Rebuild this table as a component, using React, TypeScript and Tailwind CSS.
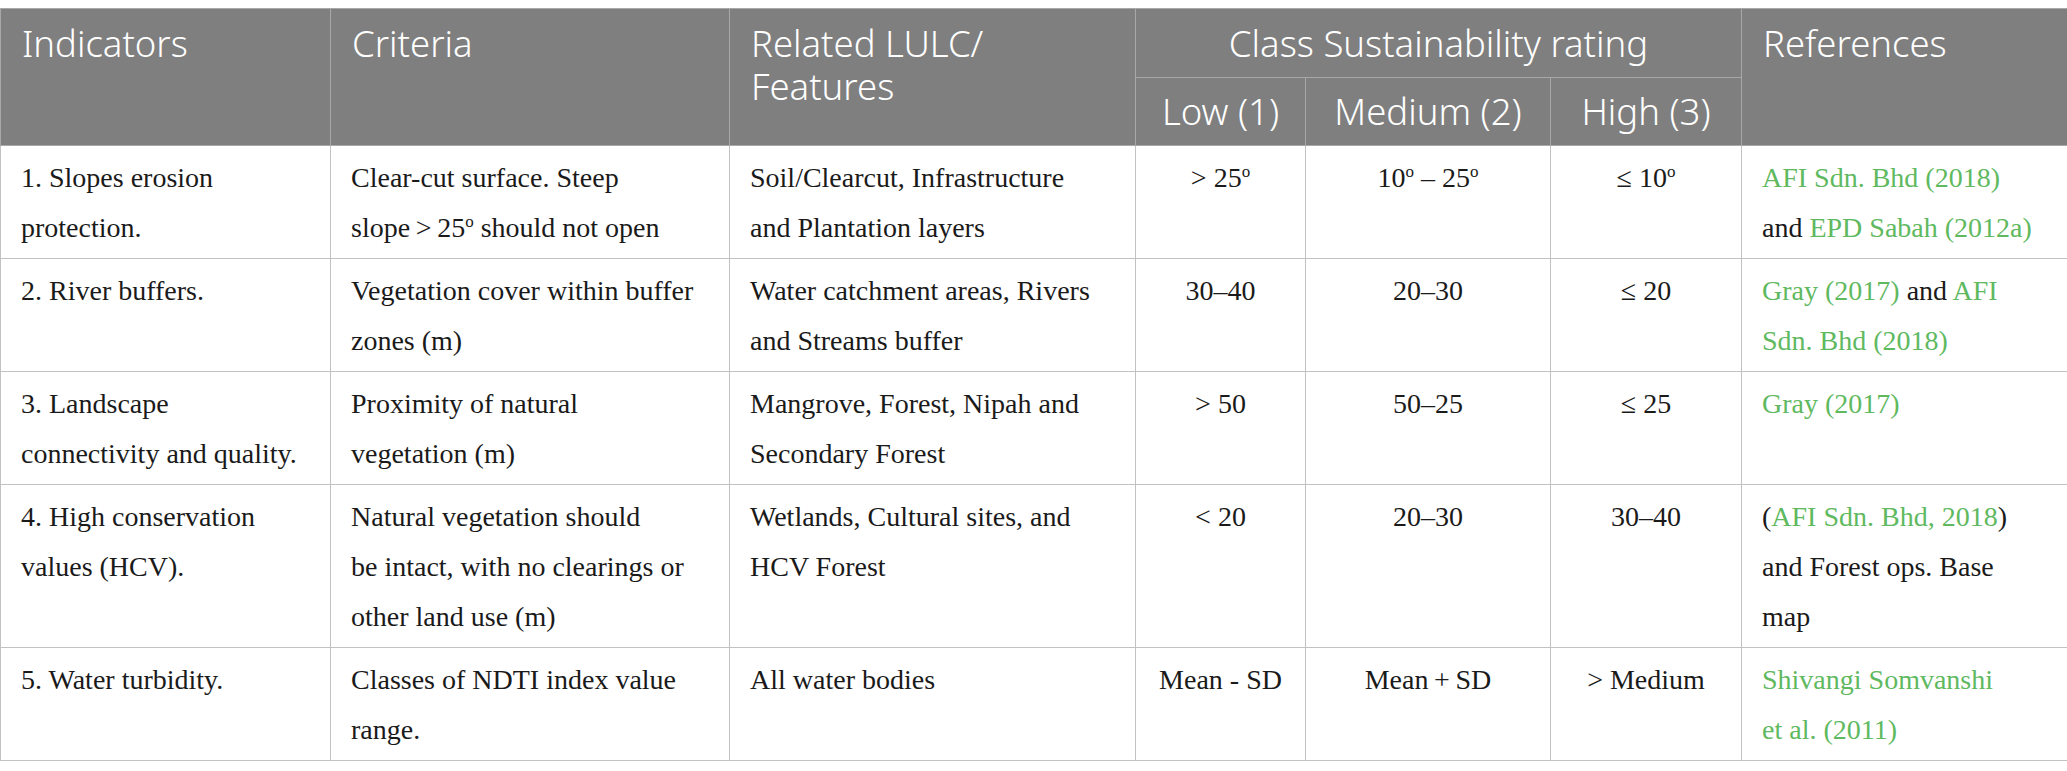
import type { ReactNode } from "react";

const G = ({ children }: { children: ReactNode }) => (
  <span className="text-[#5fb95f]">{children}</span>
);

const Deg = () => (
  <sup className="text-[17px] relative -top-[10px] align-baseline">o</sup>
);

type Row = {
  h: string;
  indicator: ReactNode;
  criteria: ReactNode;
  lulc: ReactNode;
  low: ReactNode;
  med: ReactNode;
  high: ReactNode;
  refs: ReactNode;
};

const rows: Row[] = [
  {
    h: "h-[112px]",
    indicator: (
      <>
        1. Slopes erosion
        <br />
        protection.
      </>
    ),
    criteria: (
      <>
        Clear-cut surface. Steep
        <br />
        slope{"\u2009"}&gt;{"\u2009"}25
        <Deg /> should not open
      </>
    ),
    lulc: (
      <>
        Soil/Clearcut, Infrastructure
        <br />
        and Plantation layers
      </>
    ),
    low: (
      <>
        &gt; 25
        <Deg />
      </>
    ),
    med: (
      <>
        10
        <Deg /> – 25
        <Deg />
      </>
    ),
    high: (
      <>
        ≤ 10
        <Deg />
      </>
    ),
    refs: (
      <>
        <G>AFI Sdn. Bhd (2018)</G>
        <br />
        and <G>EPD Sabah (2012a)</G>
      </>
    ),
  },
  {
    h: "h-[111px]",
    indicator: "2. River buffers.",
    criteria: (
      <>
        Vegetation cover within buffer
        <br />
        zones (m)
      </>
    ),
    lulc: (
      <>
        Water catchment areas, Rivers
        <br />
        and Streams buffer
      </>
    ),
    low: "30–40",
    med: "20–30",
    high: "≤ 20",
    refs: (
      <>
        <G>Gray (2017)</G> and <G>AFI</G>
        <br />
        <G>Sdn. Bhd (2018)</G>
      </>
    ),
  },
  {
    h: "h-[111px]",
    indicator: (
      <>
        3. Landscape
        <br />
        connectivity and quality.
      </>
    ),
    criteria: (
      <>
        Proximity of natural
        <br />
        vegetation (m)
      </>
    ),
    lulc: (
      <>
        Mangrove, Forest, Nipah and
        <br />
        Secondary Forest
      </>
    ),
    low: "> 50",
    med: "50–25",
    high: "≤ 25",
    refs: <G>Gray (2017)</G>,
  },
  {
    h: "h-[162px]",
    indicator: (
      <>
        4. High conservation
        <br />
        values (HCV).
      </>
    ),
    criteria: (
      <>
        Natural vegetation should
        <br />
        be intact, with no clearings or
        <br />
        other land use (m)
      </>
    ),
    lulc: (
      <>
        Wetlands, Cultural sites, and
        <br />
        HCV Forest
      </>
    ),
    low: "< 20",
    med: "20–30",
    high: "30–40",
    refs: (
      <>
        (<G>AFI Sdn. Bhd, 2018</G>)
        <br />
        and Forest ops. Base
        <br />
        map
      </>
    ),
  },
  {
    h: "h-[111px]",
    indicator: "5. Water turbidity.",
    criteria: (
      <>
        Classes of NDTI index value
        <br />
        range.
      </>
    ),
    lulc: "All water bodies",
    low: "Mean - SD",
    med: (
      <>
        Mean{"\u2009"}+{"\u2009"}SD
      </>
    ),
    high: "> Medium",
    refs: (
      <>
        <G>Shivangi Somvanshi</G>
        <br />
        <G>et al. (2011)</G>
      </>
    ),
  },
];

const th =
  "border border-[#a8a8a8] px-[21px] font-light text-white align-top text-left pt-[13px]";
const thSub =
  "border border-[#a8a8a8] font-light text-white text-center align-middle";
const td = "border border-[#c2c2c2] px-[20px] pt-[7px] pb-[5px] align-top";

export default function App() {
  return (
    <div className="w-[2067px] h-[771px] bg-white pt-[8px]">
      <table className="w-[2067px] table-fixed border-collapse border border-[#c2c2c2]">
        <colgroup>
          <col className="w-[330px]" />
          <col className="w-[399px]" />
          <col className="w-[406px]" />
          <col className="w-[170px]" />
          <col className="w-[245px]" />
          <col className="w-[191px]" />
          <col className="w-[326px]" />
        </colgroup>
        <thead className="bg-[#7f7f7f] font-['Noto_Sans',sans-serif] text-[36.5px] leading-[43px]">
          <tr className="h-[69px]">
            <th rowSpan={2} className={th}>
              Indicators
            </th>
            <th rowSpan={2} className={th}>
              Criteria
            </th>
            <th rowSpan={2} className={th}>
              Related LULC/
              <br />
              Features
            </th>
            <th
              colSpan={3}
              className="border border-[#a8a8a8] font-light text-white align-top text-center pt-[13px]"
            >
              Class Sustainability rating
            </th>
            <th rowSpan={2} className={th}>
              References
            </th>
          </tr>
          <tr className="h-[68px]">
            <th className={thSub}>Low (1)</th>
            <th className={thSub}>Medium (2)</th>
            <th className={thSub}>High (3)</th>
          </tr>
        </thead>
        <tbody className="font-['Liberation_Serif',serif] text-[28px] leading-[50px] text-[#1a1a1a]">
          {rows.map((r, i) => (
            <tr key={i} className={r.h}>
              <td className={td}>{r.indicator}</td>
              <td className={td}>{r.criteria}</td>
              <td className={td}>{r.lulc}</td>
              <td className={`${td} text-center`}>{r.low}</td>
              <td className={`${td} text-center`}>{r.med}</td>
              <td className={`${td} text-center`}>{r.high}</td>
              <td className={td}>{r.refs}</td>
            </tr>
          ))}
        </tbody>
      </table>
    </div>
  );
}
